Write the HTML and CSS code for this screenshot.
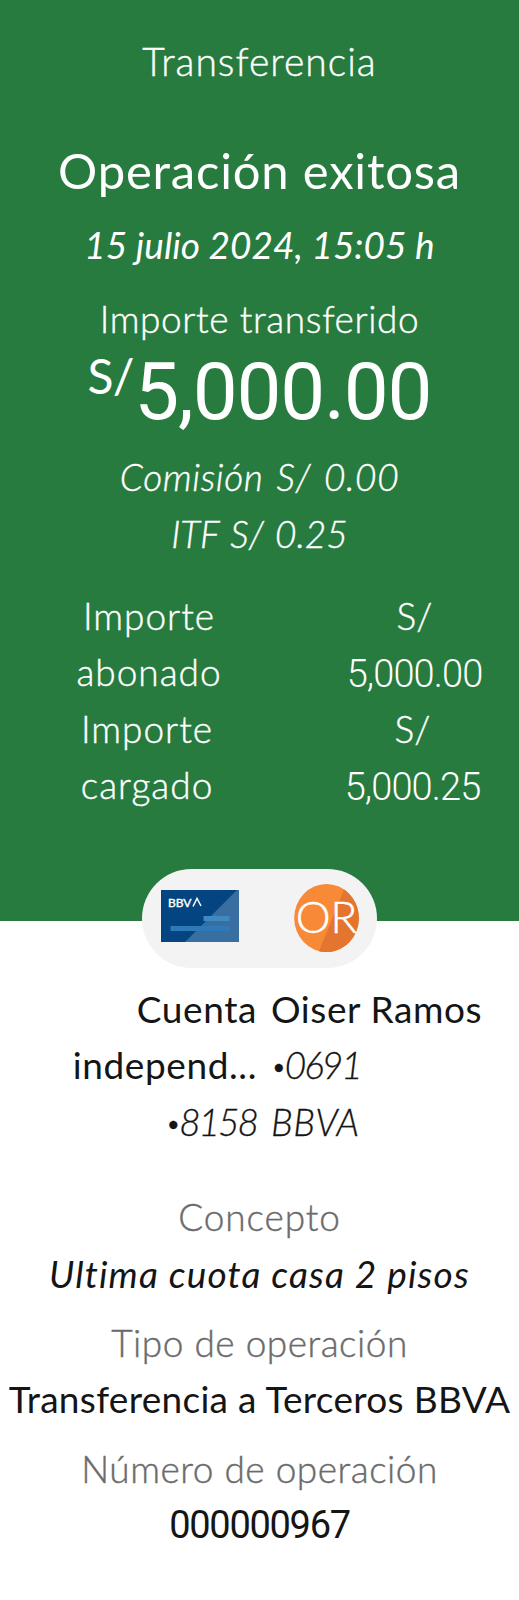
FILE: index.html
```html
<!DOCTYPE html>
<html lang="es">
<head>
    <meta charset="UTF-8">
    <meta name="viewport" content="width=device-width, initial-scale=1.0">
    <title>Transferencia</title>
    <link rel="stylesheet" href="styles.css">
</head>
<body>

<header class="summary">
    <p class="page-title">Transferencia</p>
    <h1>Operación exitosa</h1>
    <p class="date">15 julio 2024, 15:05 h</p>
    <p class="amount-label">Importe transferido</p>
    <p class="amount"><span class="currency">S/</span><span class="figure">5,000.00</span></p>
    <p class="fee">Comisión S/ 0.00</p>
    <p class="fee tax">ITF S/ 0.25</p>
    <div class="totals">
        <p class="total-label">Importe<br>abonado</p>
        <p class="total-value">S/<br><span class="digits">5,000.00</span></p>
        <p class="total-label second">Importe<br>cargado</p>
        <p class="total-value second">S/<br><span class="digits">5,000.25</span></p>
    </div>
</header>

<div class="parties">
    <svg class="card-icon" viewBox="0 0 78 52">
        <rect width="78" height="52" fill="#034481"/>
        <path d="M76 0h2v52H24z" fill="#396ea0"/>
        <rect x="42.5" y="26" width="26" height="5" fill="#3f88c1"/>
        <rect x="9.5" y="36" width="59" height="5" fill="#2e7ab8"/>
        <text x="7" y="16.5" class="card-brand">BBV</text>
        <path d="M32 16.5L36 8.500L40 16" class="card-brand-a"/>
    </svg>
    <svg class="avatar" viewBox="0 0 65 68">
        <ellipse cx="32.5" cy="34" rx="32.3" ry="34" fill="#f88937"/>
        <path d="M50 5.5A32.3 34 0 0 1 25 67.2Z" fill="#e4752f"/>
        <text x="32.5" y="48.5" class="avatar-text">OR</text>
    </svg>
</div>

<main>
    <div class="accounts">
        <p class="origin">Cuenta<br>independ...<br><i><span class="bullet">•</span><span class="last-digits">8158</span></i></p>
        <p class="target">Oiser Ramos<br><i><span class="bullet">•</span><span class="last-digits">0691</span></i><br><i>BBVA</i></p>
    </div>
    <dl>
        <dt class="concept-label">Concepto</dt>
        <dd class="concept">Ultima cuota casa 2 pisos</dd>
        <dt>Tipo de operación</dt>
        <dd>Transferencia a Terceros BBVA</dd>
        <dt>Número de operación</dt>
        <dd class="number">000000967</dd>
    </dl>
</main>

</body>
</html>
```
FILE: styles.css
```css
* {
    box-sizing: border-box;
    margin: 0;
    padding: 0;
}
body {
    font-family: Lato, sans-serif;
    font-size: 37px;
    line-height: 56.4px;
    font-weight: 300;
    font-variant-ligatures: none;
    color: #151515;
    background: white;
    text-align: center;
    white-space: nowrap;
    -webkit-text-stroke: 0.4px;
}
.summary {
    height: 921px;
    padding-top: 33px;
    background: #277b3e;
    color: white;
}
.page-title {
    font-size: 39px;
    letter-spacing: 1px;
}
h1 {
    margin-top: 51px;
    font-size: 49px;
    line-height: 60px;
    font-weight: 400;
    letter-spacing: 0.8px;
    -webkit-text-stroke: 0;
}
.date {
    margin-top: 17px;
    font-style: italic;
    font-weight: 400;
    -webkit-text-stroke: 0;
}
.amount-label {
    margin-top: 17px;
    letter-spacing: 0.6px;
}
.amount {
    display: flex;
    justify-content: center;
    height: 102px;
    font-weight: 400;
    -webkit-text-stroke: 0;
}
.currency {
    margin-right: 1px;
    font-size: 48px;
    line-height: 58px;
    letter-spacing: -1px;
}
.figure {
    font-family: Roboto, sans-serif;
    font-size: 80px;
    line-height: 91px;
    font-kerning: none;
    letter-spacing: -1.2px;
}
.fee {
    font-style: italic;
    letter-spacing: 0.6px;
    word-spacing: 3px;
}
.tax {
    letter-spacing: 0;
    word-spacing: 2px;
}
.totals {
    display: grid;
    grid-template-columns: 298px 233px;
    margin-top: 26px;
}
.total-label {
    letter-spacing: 1px;
}
.second {
    padding-right: 4px;
}
.digits {
    font-family: Roboto, sans-serif;
    font-size: 38px;
    line-height: 1;
    font-kerning: none;
    letter-spacing: -0.9px;
    vertical-align: -1px;
    -webkit-text-stroke: 0;
}
.parties {
    display: flex;
    justify-content: space-between;
    position: relative;
    width: 235px;
    height: 99px;
    margin: -52px auto 0;
    padding: 15px 18px 0 19px;
    background: #f3f3f3;
    border-radius: 50px;
}
.card-icon {
    width: 78px;
    height: 52px;
    margin-top: 6px;
}
.card-brand {
    font-size: 12px;
    font-weight: 400;
    fill: white;
    stroke: white;
    stroke-width: 0.4px;
}
.card-brand-a {
    fill: none;
    stroke: white;
    stroke-width: 1.5;
}
.avatar {
    width: 65px;
    height: 68px;
}
.avatar-text {
    font-size: 44px;
    text-anchor: middle;
    fill: white;
    stroke: white;
    stroke-width: 0.5px;
}
.accounts {
    display: grid;
    grid-template-columns: 257px 247px;
    gap: 15px;
    padding-top: 13px;
    font-weight: 400;
    letter-spacing: 0.6px;
    -webkit-text-stroke: 0;
}
.accounts i {
    font-weight: 300;
    -webkit-text-stroke: 0.3px;
}
.bullet {
    font-size: 27px;
    line-height: 1;
    letter-spacing: -2px;
    vertical-align: 3px;
}
.last-digits {
    letter-spacing: -2px;
}
.origin {
    text-align: right;
}
.target {
    margin-left: -1px;
    text-align: left;
}
dl {
    margin-top: 39px;
}
dt {
    color: #6b6b6b;
    letter-spacing: 0.5px;
}
.concept-label {
    letter-spacing: 0.9px;
}
dd {
    margin-bottom: 13px;
    font-weight: 400;
    letter-spacing: 0.3px;
    -webkit-text-stroke: 0;
}
.concept {
    font-style: italic;
    letter-spacing: 1.15px;
}
.number {
    font-family: Roboto, sans-serif;
    font-size: 38px;
    letter-spacing: -1.3px;
}
```
